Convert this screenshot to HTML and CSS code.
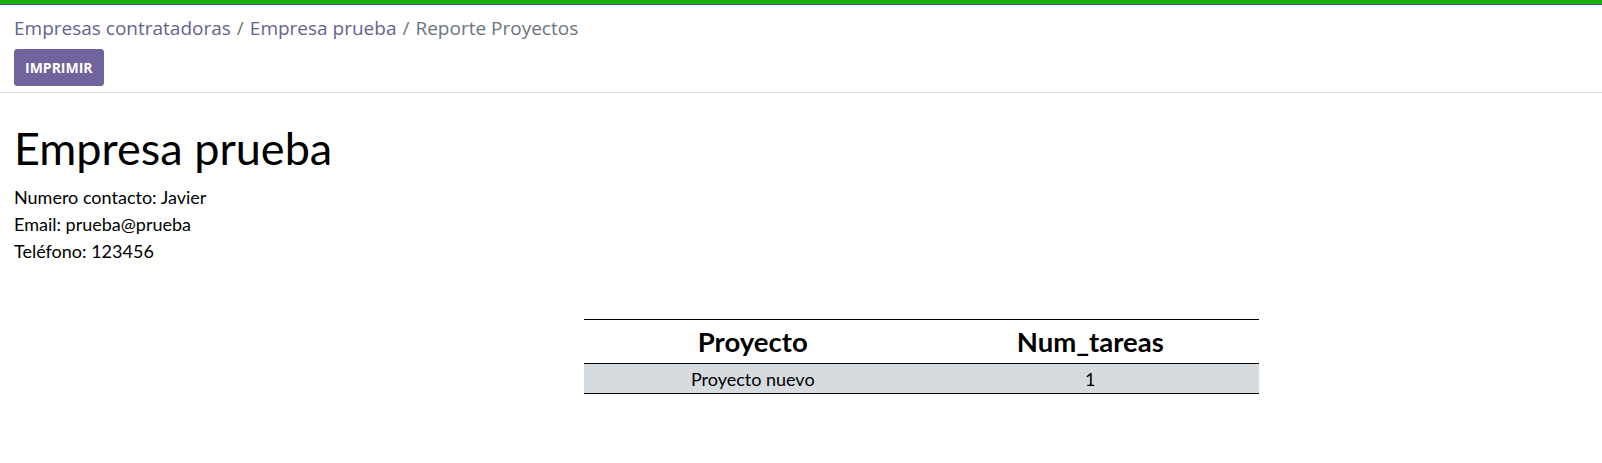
FILE: index.html
```html
<!DOCTYPE html>
<html>
<head>
<meta charset="utf-8">
<link rel="stylesheet" href="styles.css">
</head>
<body>
<div class="topbar"></div>
<div class="control-panel">
  <div class="breadcrumb">
    <a class="crumb">Empresas contratadoras</a><span class="sep">/</span><a class="crumb">Empresa prueba</a><span class="sep">/</span><span class="crumb active">Reporte Proyectos</span>
  </div>
  <div class="buttons">
    <button class="btn-primary">IMPRIMIR</button>
  </div>
</div>
<div class="content">
  <h1 class="title">Empresa prueba</h1>
  <div class="info">Numero contacto: Javier</div>
  <div class="info">Email: prueba@prueba</div>
  <div class="info">Teléfono: 123456</div>
  <table class="report">
    <thead>
      <tr><th>Proyecto</th><th>Num_tareas</th></tr>
    </thead>
    <tbody>
      <tr><td>Proyecto nuevo</td><td>1</td></tr>
    </tbody>
  </table>
</div>
</body>
</html>
```
FILE: styles.css
```css
html, body {
  margin: 0;
  padding: 0;
  background: #fff;
}
body {
  font-family: Lato, "Open Sans", sans-serif;
  color: #000;
}
.topbar {
  height: 4px;
  background: #17b10e;
  border-bottom: 1px solid #5a4f8a;
}
.control-panel {
  padding: 11px 14px 6px 14px;
  border-bottom: 1px solid #dee2e6;
  font-family: "Open Sans", sans-serif;
}
.breadcrumb {
  font-size: 19px;
  line-height: 25px;
  color: #66628f;
}
.crumb {
  color: #66628f;
}
.crumb.active {
  color: #6c757d;
}
.sep {
  color: #6c757d;
  padding: 0 6px;
}
.buttons {
  margin-top: 8px;
  display: flex;
}
.btn-primary {
  font-family: "Open Sans", sans-serif;
  font-weight: 700;
  font-size: 14px;
  color: #fff;
  background: #71639e;
  border: 1px solid #71639e;
  border-radius: 3px;
  height: 37px;
  padding: 0 10px;
}
.content {
  padding: 28px 14px;
}
.title {
  font-family: Lato, sans-serif;
  font-weight: 400;
  font-size: 45px;
  line-height: 54px;
  margin: 0 0 9px 0;
}
.info {
  font-size: 18px;
  line-height: 27px;
}
.report {
  border-collapse: collapse;
  width: 675px;
  margin: 54px 0 0 570px;
  border-top: 1px solid #000;
  border-bottom: 1px solid #000;
  table-layout: fixed;
}
.report th {
  font-size: 27.5px;
  font-weight: 700;
  height: 43px;
  padding: 0;
  text-align: center;
  border-bottom: 1px solid #000;
}
.report td {
  font-size: 18px;
  height: 29px;
  padding: 0;
  text-align: center;
  background: #d6dbdf;
}
```
